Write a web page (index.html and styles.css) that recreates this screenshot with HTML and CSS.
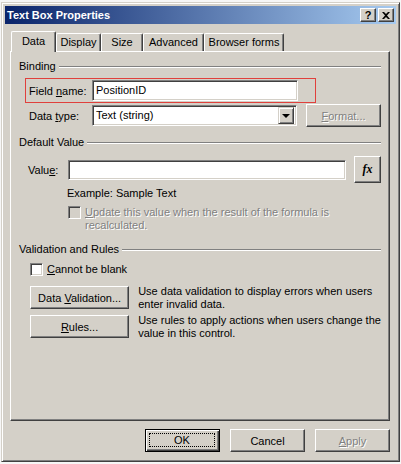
FILE: index.html
```html
<!DOCTYPE html>
<html lang="en">
<head>
    <meta charset="UTF-8">
    <title>Text Box Properties</title>
    <link rel="stylesheet" href="styles.css">
</head>
<body>
    <div class="window">
        <div class="titlebar">
            <span class="title">Text Box Properties</span>
            <div class="caption-btns">
                <span class="cbtn help">?</span>
                <span class="cbtn close">
                    <svg width="8" height="7" viewBox="0 0 8 7"><path d="M0 0h2l2 2 2-2h2L5 3.5 8 7H6L4 5 2 7H0l3-3.5z" fill="#000"/></svg>
                </span>
            </div>
        </div>

        <div class="client">
            <div class="tabs">
                <div class="tab selected" style="width:45px">Data</div>
                <div class="tab" style="width:45px">Display</div>
                <div class="tab" style="width:42px">Size</div>
                <div class="tab" style="width:61px">Advanced</div>
                <div class="tab" style="width:80px">Browser forms</div>
            </div>

            <div class="panel">
                <div class="group-head"><span>Binding</span><i class="etch"></i></div>

                <div class="row highlight">
                    <label class="lbl lbl-wide">Field <u>n</u>ame:</label>
                    <div class="edit field-name">PositionID</div>
                </div>

                <div class="row type-row">
                    <label class="lbl lbl-wide">Data <u>t</u>ype:</label>
                    <div class="edit combo">
                        <span class="combo-text">Text (string)</span>
                        <span class="drop-btn"><i class="arrow"></i></span>
                    </div>
                    <div class="btn disabled format-btn"><span><u>F</u>ormat...</span></div>
                </div>

                <div class="group-head gap-default"><span>Default Value</span><i class="etch"></i></div>

                <div class="row value-row">
                    <label class="lbl lbl-value">Valu<u>e</u>:</label>
                    <div class="edit value-edit"></div>
                    <div class="btn fx-btn"><span class="fx">fx</span></div>
                </div>

                <div class="example">Example: Sample Text</div>

                <div class="check-row update-row">
                    <span class="checkbox disabled"></span>
                    <span class="check-text disabled-text">Update this value when the result of the formula is recalculated.</span>
                </div>

                <div class="group-head gap-valid"><span>Validation and Rules</span><i class="etch"></i></div>

                <div class="check-row blank-row">
                    <span class="checkbox"></span>
                    <span class="check-text"><u>C</u>annot be blank</span>
                </div>

                <div class="rule-row first">
                    <div class="btn rule-btn"><span>Data <u>V</u>alidation...</span></div>
                    <p class="rule-desc">Use data validation to display errors when users enter invalid data.</p>
                </div>
                <div class="rule-row">
                    <div class="btn rule-btn"><span><u>R</u>ules...</span></div>
                    <p class="rule-desc">Use rules to apply actions when users change the value in this control.</p>
                </div>
            </div>

            <div class="dlg-buttons">
                <div class="btn default"><span class="focus">OK</span></div>
                <div class="btn">Cancel</div>
                <div class="btn disabled"><span><u>A</u>pply</span></div>
            </div>
        </div>
    </div>
</body>
</html>
```

FILE: styles.css
```css
* {
    box-sizing: border-box;
}
body {
    margin: 0;
    background: #f6f6f6;
    font-family: "Liberation Sans", Arial, sans-serif;
    font-size: 11px;
    color: #000;
}
u {
    text-decoration: underline;
    text-underline-offset: 1px;
}

/* window frame */
.window {
    margin: 2px 0 0 1px;
    width: 399px;
    height: 460px;
    background: #d4d0c8;
    border: 1px solid;
    border-color: #d4d0c8 #404040 #404040 #d4d0c8;
    box-shadow: inset 1px 1px #fff, inset -1px -1px #808080;
    padding: 3px;
    display: flex;
    flex-direction: column;
}
.titlebar {
    height: 18px;
    background: linear-gradient(to right, #0a246a, #a6caf0);
    display: flex;
    align-items: center;
    justify-content: space-between;
    padding: 0 2px 0 2px;
    color: #fff;
    font-weight: bold;
}
.caption-btns {
    display: flex;
    gap: 2px;
}
.cbtn {
    width: 16px;
    height: 14px;
    background: #d4d0c8;
    border: 1px solid;
    border-color: #fff #404040 #404040 #fff;
    box-shadow: inset -1px -1px #808080;
    color: #000;
    font-size: 11px;
    line-height: 12px;
    text-align: center;
    display: flex;
    align-items: center;
    justify-content: center;
}

/* tabs + page */
.client {
    padding: 7px 0 0 5px;
    display: flex;
    flex-direction: column;
}
.tabs {
    display: flex;
    align-items: flex-end;
    height: 20px;
    padding-left: 1px;
}
.tab {
    height: 18px;
    border: 1px solid;
    border-bottom: none;
    border-color: #fff #404040 #fff #fff;
    box-shadow: inset -1px 0 #808080;
    border-radius: 2px 2px 0 0;
    text-align: center;
    line-height: 16px;
    background: #d4d0c8;
}
.tab.selected {
    height: 21px;
    margin-bottom: -1px;
    position: relative;
    z-index: 1;
    line-height: 18px;
}
.panel {
    width: 380px;
    height: 370px;
    border: 1px solid;
    border-color: #fff #404040 #404040 #fff;
    box-shadow: inset -1px -1px #808080;
    padding: 8px 8px 0 8px;
}
.group-head {
    display: flex;
    align-items: center;
    height: 13px;
    line-height: 13px;
}
.etch {
    flex: 1;
    height: 2px;
    margin-left: 3px;
    border-top: 1px solid #808080;
    border-bottom: 1px solid #fff;
}
.gap-default {
    margin-top: 9px;
}
.gap-valid {
    margin-top: 11px;
}

/* rows */
.row {
    display: flex;
    align-items: center;
}
.lbl-wide {
    width: 63px;
}
.highlight {
    margin: 5px 0 0 6px;
    width: 291px;
    height: 25px;
    border: 1px solid #e0403c;
    padding-left: 3px;
}
.edit {
    height: 21px;
    background: #fff;
    border: 1px solid;
    border-color: #808080 #fff #fff #808080;
    box-shadow: inset 1px 1px #404040, inset -1px -1px #d4d0c8;
    padding: 0 3px;
    line-height: 19px;
}
.field-name {
    width: 206px;
}
.type-row {
    margin-top: 1px;
    height: 23px;
    padding-left: 10px;
}
.combo {
    width: 205px;
    display: flex;
    align-items: center;
    padding: 2px 2px 2px 3px;
}
.combo-text {
    flex: 1;
}
.drop-btn {
    width: 16px;
    height: 17px;
    background: #d4d0c8;
    border: 1px solid;
    border-color: #d4d0c8 #404040 #404040 #d4d0c8;
    box-shadow: inset 1px 1px #fff, inset -1px -1px #808080;
    display: flex;
    align-items: center;
    justify-content: center;
}
.arrow {
    width: 0;
    height: 0;
    border-left: 4px solid transparent;
    border-right: 4px solid transparent;
    border-top: 4px solid #000;
}

/* buttons */
.btn {
    width: 75px;
    height: 23px;
    background: #d4d0c8;
    border: 1px solid;
    border-color: #fff #404040 #404040 #fff;
    box-shadow: inset -1px -1px #808080;
    display: flex;
    align-items: center;
    justify-content: center;
}
.btn.disabled {
    color: #808080;
    text-shadow: 1px 1px #fff;
}
.format-btn {
    margin-left: 9px;
}
.btn.default {
    border: 1px solid #000;
    box-shadow: inset 1px 1px #fff, inset -1px -1px #404040, inset -2px -2px #808080;
    padding: 3px 4px 4px 3px;
}
.focus {
    flex: 1;
    align-self: stretch;
    border: 1px dotted #000;
    display: flex;
    align-items: center;
    justify-content: center;
}

.value-row {
    margin-top: 7px;
    height: 27px;
    padding-left: 9px;
}
.lbl-value {
    width: 40px;
}
.value-edit {
    width: 278px;
    height: 20px;
}
.fx-btn {
    width: 27px;
    height: 27px;
    margin-left: 8px;
}
.fx {
    font-family: "Liberation Serif", serif;
    font-style: italic;
    font-weight: bold;
    font-size: 12px;
}
.example {
    margin-top: 4px;
    padding-left: 48px;
    line-height: 13px;
}

/* checkboxes */
.check-row {
    display: flex;
    align-items: flex-start;
    line-height: 13px;
}
.checkbox {
    flex: none;
    width: 13px;
    height: 13px;
    background: #fff;
    border: 1px solid;
    border-color: #808080 #fff #fff #808080;
    box-shadow: inset 1px 1px #404040, inset -1px -1px #d4d0c8;
}
.checkbox.disabled {
    background: #d4d0c8;
}
.check-text {
    margin-left: 4px;
}
.disabled-text {
    color: #808080;
    text-shadow: 1px 1px #fff;
    width: 262px;
    text-decoration: none;
}
.disabled-text::first-letter {
    text-decoration: underline;
}
.update-row {
    margin-top: 6px;
    padding-left: 49px;
}
.blank-row {
    margin-top: 7px;
    padding-left: 11px;
}

.rule-row {
    display: flex;
    align-items: flex-start;
    height: 23px;
    padding-left: 11px;
    margin-top: 6px;
}
.rule-row.first {
    margin-top: 10px;
}
.rule-btn {
    width: 100px;
}
.rule-desc {
    margin: -1px 0 0 9px;
    width: 245px;
    line-height: 13px;
}

.dlg-buttons {
    width: 380px;
    margin-top: 8px;
    display: flex;
    justify-content: flex-end;
    gap: 10px;
}
```
